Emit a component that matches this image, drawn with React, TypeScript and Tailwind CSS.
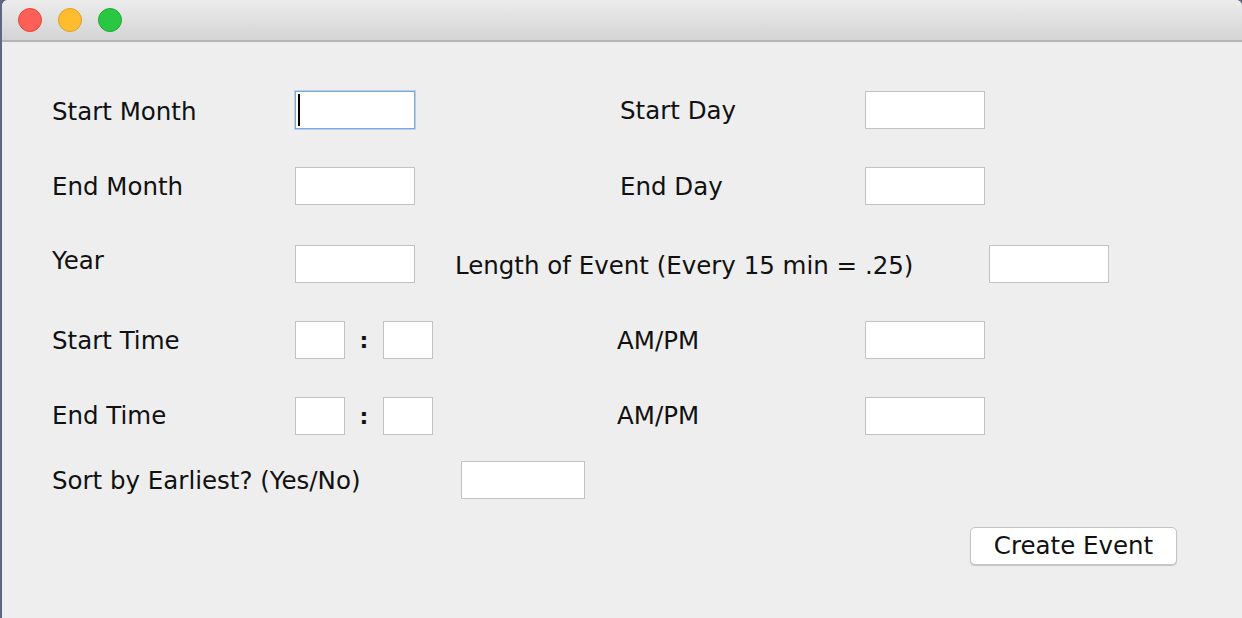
import React from 'react';

const Field: React.FC<{ w?: string; focused?: boolean }> = ({ w = 'w-[120px]', focused }) => (
  <div
    className={`${w} h-[38px] shrink-0 bg-white border ${
      focused
        ? 'border-[#7aa7e0] shadow-[0_0_0_1px_rgba(122,167,224,0.45)] flex items-center pl-[2px]'
        : 'border-[#c2c2c2]'
    }`}
  >
    {focused && <div className="w-[2px] h-[32px] bg-black" />}
  </div>
);

const Label: React.FC<{ w: string; className?: string; children: React.ReactNode }> = ({ w, className = '', children }) => (
  <div className={`${w} shrink-0 whitespace-nowrap ${className}`}>{children}</div>
);

const Colon = () => (
  <div className="w-[38px] shrink-0 flex justify-center font-bold text-[22px]">:</div>
);

export default function App() {
  return (
    <div className="w-[1242px] h-[618px] bg-[#5d6783] overflow-hidden">
      <div
        className="ml-[2px] h-full bg-[#eeeeee] rounded-tl-[6px] rounded-tr-[6px] overflow-hidden flex flex-col text-[24.5px] text-[#111] antialiased"
        style={{ fontFamily: '"DejaVu Sans", "Liberation Sans", sans-serif' }}
      >
        {/* title bar */}
        <div className="h-[42px] shrink-0 bg-gradient-to-b from-[#ececec] to-[#d4d4d4] border-b-2 border-[#b5b5b5] flex items-center gap-[16px] pl-[16px]">
          <div className="w-[24px] h-[24px] rounded-full bg-[#fe5f57] border border-[#e2463f]" />
          <div className="w-[24px] h-[24px] rounded-full bg-[#febc2e] border border-[#dfa023]" />
          <div className="w-[24px] h-[24px] rounded-full bg-[#2ac842] border border-[#1daa2c]" />
        </div>

        <div className="flex flex-col pl-[50px] pt-[49px]">
          {/* row 1 */}
          <div className="flex items-center h-[38px]">
            <Label w="w-[243px]" className="mt-[4px]">Start Month</Label>
            <Field focused />
            <div className="w-[205px] shrink-0" />
            <Label w="w-[245px]" className="mt-[2px]">Start Day</Label>
            <Field />
          </div>

          {/* row 2 */}
          <div className="flex items-center h-[38px] mt-[38px]">
            <Label w="w-[243px]" className="mt-[2px]">End Month</Label>
            <Field />
            <div className="w-[205px] shrink-0" />
            <Label w="w-[245px]" className="mt-[2px]">End Day</Label>
            <Field />
          </div>

          {/* row 3 */}
          <div className="flex items-center h-[38px] mt-[40px]">
            <Label w="w-[243px]" className="mb-[6px]">Year</Label>
            <Field />
            <div className="w-[40px] shrink-0" />
            <Label w="w-[534px]" className="mt-[4px]">Length of Event (Every 15 min = .25)</Label>
            <Field />
          </div>

          {/* row 4 */}
          <div className="flex items-center h-[38px] mt-[38px]">
            <Label w="w-[243px]" className="mt-[2px]">Start Time</Label>
            <Field w="w-[50px]" />
            <Colon />
            <Field w="w-[50px]" />
            <div className="w-[184px] shrink-0" />
            <Label w="w-[248px]" className="mt-[2px]">AM/PM</Label>
            <Field />
          </div>

          {/* row 5 */}
          <div className="flex items-center h-[38px] mt-[38px]">
            <Label w="w-[243px]" className="mt-[1px]">End Time</Label>
            <Field w="w-[50px]" />
            <Colon />
            <Field w="w-[50px]" />
            <div className="w-[184px] shrink-0" />
            <Label w="w-[248px]" className="mt-[1px]">AM/PM</Label>
            <Field />
          </div>

          {/* row 6 */}
          <div className="flex items-center h-[38px] mt-[26px]">
            <Label w="w-[409px]" className="mt-[2px]">Sort by Earliest? (Yes/No)</Label>
            <Field w="w-[124px]" />
          </div>

          <div className="flex mt-[28px] pl-[918px]">
            <button className="w-[207px] h-[38px] bg-white border border-[#c4c4c4] rounded-[5px] shadow-[0_1px_1px_rgba(0,0,0,0.18)] flex items-center justify-center text-[24.5px] text-[#111]">
              Create Event
            </button>
          </div>
        </div>
      </div>
    </div>
  );
}
